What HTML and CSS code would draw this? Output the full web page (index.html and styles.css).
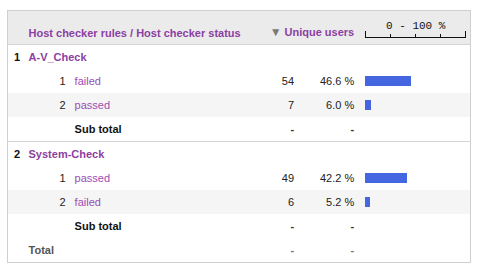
FILE: index.html
```html
<!DOCTYPE html>
<html>
<head>
<meta charset="utf-8">
<link rel="stylesheet" href="styles.css">
</head>
<body>
<table class="report">
  <colgroup>
    <col class="c-gi"><col class="c-si"><col class="c-label"><col class="c-users"><col class="c-pct"><col class="c-bar">
  </colgroup>
  <thead>
    <tr class="head">
      <th></th>
      <th colspan="2" class="h-label">Host checker rules / Host checker status</th>
      <th colspan="2" class="h-users"><span class="sort">▼</span>Unique users</th>
      <th class="h-scale">
        <div class="scale">
          <span class="scale-text">0 - 100 %</span>
          <div class="ruler">
            <i class="tick tall"></i><i class="tick"></i><i class="tick"></i><i class="tick"></i><i class="tick tall"></i>
          </div>
        </div>
      </th>
    </tr>
  </thead>
  <tbody>
    <tr class="group">
      <td class="gi">1</td><td colspan="2" class="gname">A-V_Check</td><td></td><td></td><td></td>
    </tr>
    <tr>
      <td></td><td class="si">1</td><td class="label">failed</td><td class="num">54</td><td class="pct">46.6 %</td><td class="bar-cell"><div class="bar" style="width:46px"></div></td>
    </tr>
    <tr class="alt">
      <td></td><td class="si">2</td><td class="label">passed</td><td class="num">7</td><td class="pct">6.0 %</td><td class="bar-cell"><div class="bar" style="width:6px"></div></td>
    </tr>
    <tr class="sub">
      <td></td><td></td><td class="subl">Sub total</td><td class="num dash">-</td><td class="pct dash">-</td><td></td>
    </tr>
    <tr class="group sep">
      <td class="gi">2</td><td colspan="2" class="gname">System-Check</td><td></td><td></td><td></td>
    </tr>
    <tr>
      <td></td><td class="si">1</td><td class="label">passed</td><td class="num">49</td><td class="pct">42.2 %</td><td class="bar-cell"><div class="bar" style="width:42px"></div></td>
    </tr>
    <tr class="alt">
      <td></td><td class="si">2</td><td class="label">failed</td><td class="num">6</td><td class="pct">5.2 %</td><td class="bar-cell"><div class="bar" style="width:5px"></div></td>
    </tr>
    <tr class="sub">
      <td></td><td></td><td class="subl">Sub total</td><td class="num dash">-</td><td class="pct dash">-</td><td></td>
    </tr>
    <tr class="total">
      <td></td><td colspan="2" class="totl">Total</td><td class="num dash">-</td><td class="pct dash">-</td><td></td>
    </tr>
  </tbody>
</table>
</body>
</html>
```
FILE: styles.css
```css
html, body {
  margin: 0;
  background: #fff;
}
body {
  padding: 10px 7px;
  font-family: "Liberation Sans", Arial, sans-serif;
  font-size: 11px;
  color: #222;
}
.report {
  border-collapse: collapse;
  table-layout: fixed;
  width: 464px;
  border: 1px solid #cfcfcf;
}
.c-gi { width: 21px; }
.c-si { width: 41px; }
.c-label { width: 180px; }
.c-users { width: 50px; }
.c-pct { width: 54px; }
.c-bar { width: 116px; }

th, td {
  padding: 0;
  white-space: nowrap;
}
.head th {
  background: #ebebeb;
  height: 28px;
  vertical-align: bottom;
  padding-bottom: 5px;
  border-bottom: 1px solid #d4d4d4;
  color: #8c3fa3;
  font-weight: bold;
  text-align: left;
}
.h-users {
  text-align: right !important;
}
.sort {
  color: #7a7a7a;
  font-size: 12px;
  margin-right: 3px;
}
.h-scale {
  padding-left: 11px;
}
.scale {
  width: 101px;
  display: flex;
  flex-direction: column;
  align-items: center;
  margin-bottom: 1px;
}
.scale-text {
  font-family: "Liberation Mono", "DejaVu Sans Mono", monospace;
  font-weight: normal;
  font-size: 11px;
  color: #111;
  line-height: 11px;
  margin-bottom: -1px;
}
.ruler {
  width: 101px;
  height: 6px;
  border-bottom: 1px solid #111;
  display: flex;
  justify-content: space-between;
  align-items: flex-end;
}
.tick {
  display: block;
  width: 1px;
  height: 3px;
  background: #111;
}
.tick.tall {
  height: 6px;
}

tbody td {
  height: 24px;
  vertical-align: middle;
}
.alt td {
  background: #f5f5f5;
}
.gi {
  padding-left: 6px;
  font-weight: bold;
  color: #111;
}
.gname {
  color: #8c3fa3;
  font-weight: bold;
}
.si {
  text-align: right;
  padding-right: 4px;
  color: #222;
}
.label {
  padding-left: 5px;
  color: #9b4db3;
}
.subl {
  padding-left: 5px;
  font-weight: bold;
  color: #111;
}
.totl {
  font-weight: bold;
  color: #555;
}
.num {
  text-align: right;
  padding-right: 6px;
}
.pct {
  text-align: right;
}
.dash {
  font-weight: bold;
  color: #333;
}
.total .dash {
  color: #777;
}
.sep td {
  border-top: 1px solid #d4d4d4;
}
.bar-cell {
  padding-left: 11px;
}
.bar {
  height: 10px;
  background: #4466e0;
}
```
